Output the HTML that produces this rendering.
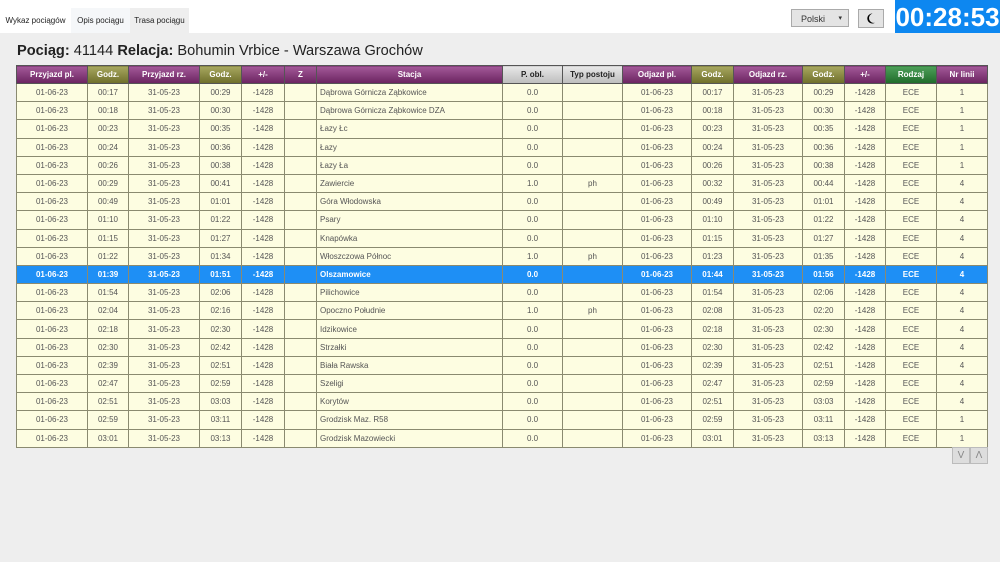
<!DOCTYPE html>
<html><head><meta charset="utf-8"><style>
body{margin:0;width:1000px;height:562px;background:#eeeeee;font-family:"Liberation Sans",Arial,sans-serif;overflow:hidden;position:relative}
.top{position:absolute;left:0;top:0;width:1000px;height:33px;background:#fff}
.tab{position:absolute;top:8px;height:25px;font-size:8px;line-height:25px;text-align:center;color:#222}
.sel{position:absolute;left:791px;top:9px;width:58px;height:18px;border:1px solid #aaa;background:#e4e4e4;font-size:9px;line-height:18px;box-sizing:border-box;padding-left:9px;color:#333}
.moon{position:absolute;left:858px;top:9px;width:26px;height:19px;border:1px solid #aaa;background:#e4e4e4;box-sizing:border-box}
.clock{position:absolute;left:895px;top:0;width:105px;height:33px;background:#0d87f0;color:#fff;font-weight:bold;font-size:26px;line-height:34px;text-align:center}
h1{position:absolute;left:17px;top:43px;margin:0;font-size:14.6px;font-weight:normal;color:#222}
table{position:absolute;left:16px;top:65px;width:971px;border-collapse:collapse;font-size:8px;table-layout:fixed}
th{height:17px;padding:0;color:#fff;font-weight:bold;background:linear-gradient(#a45a99,#6a2360);border:1px solid #555;font-size:8px}
th.g{background:linear-gradient(#a8a860,#6e6e2a)}
th.gr{background:linear-gradient(#e8e8e8,#bdbdbd);color:#222}
th.gn{background:linear-gradient(#4ea05a,#1f6b2a)}
td{height:17.2px;padding:0;border:1px solid #8a8a70;background:#fdfde1;color:#555;text-align:center}
td.l{text-align:left;padding-left:3px}
tr.s td{background:#1e8ff5;color:#fff;font-weight:bold}
.btn{position:absolute;top:447px;width:18px;height:17px;background:#ddd;border:1px solid #bbb;box-sizing:border-box;color:#888;font-size:10px;text-align:center;line-height:16px}
</style></head><body>
<div class="top"></div>
<div class="tab" style="left:0;width:71px;background:#fff">Wykaz pociągów</div>
<div class="tab" style="left:71px;width:59px;background:#f5f7f9">Opis pociągu</div>
<div class="tab" style="left:130px;width:59px;background:#eeeeee">Trasa pociągu</div>
<div class="sel">Polski<span style="position:absolute;right:6px;font-size:7px">▾</span></div>
<div class="moon"><svg width="24" height="17" viewBox="0 0 24 17"><path d="M13.5 3.5a5 5 0 1 0 2.5 9.2 4.2 4.2 0 0 1-2.5-9.2z" fill="#000"/></svg></div>
<div class="clock">00:28:53</div>
<h1><b>Pociąg:</b> 41144 <b>Relacja:</b> Bohumin Vrbice - Warszawa Grochów</h1>
<table>
<colgroup><col style="width:71px"><col style="width:41px"><col style="width:71px"><col style="width:42px"><col style="width:43px"><col style="width:32px"><col style="width:186px"><col style="width:60px"><col style="width:60px"><col style="width:69px"><col style="width:42px"><col style="width:69px"><col style="width:42px"><col style="width:41px"><col style="width:51px"><col style="width:51px"></colgroup>
<tr><th>Przyjazd pl.</th><th class="g">Godz.</th><th>Przyjazd rz.</th><th class="g">Godz.</th><th>+/-</th><th>Z</th><th>Stacja</th><th class="gr">P. obl.</th><th class="gr">Typ postoju</th><th>Odjazd pl.</th><th class="g">Godz.</th><th>Odjazd rz.</th><th class="g">Godz.</th><th>+/-</th><th class="gn">Rodzaj</th><th>Nr linii</th></tr>
<tr><td>01-06-23</td><td>00:17</td><td>31-05-23</td><td>00:29</td><td>-1428</td><td></td><td class="l">Dąbrowa Górnicza Ząbkowice</td><td>0.0</td><td></td><td>01-06-23</td><td>00:17</td><td>31-05-23</td><td>00:29</td><td>-1428</td><td>ECE</td><td>1</td></tr>
<tr><td>01-06-23</td><td>00:18</td><td>31-05-23</td><td>00:30</td><td>-1428</td><td></td><td class="l">Dąbrowa Górnicza Ząbkowice DZA</td><td>0.0</td><td></td><td>01-06-23</td><td>00:18</td><td>31-05-23</td><td>00:30</td><td>-1428</td><td>ECE</td><td>1</td></tr>
<tr><td>01-06-23</td><td>00:23</td><td>31-05-23</td><td>00:35</td><td>-1428</td><td></td><td class="l">Łazy Łc</td><td>0.0</td><td></td><td>01-06-23</td><td>00:23</td><td>31-05-23</td><td>00:35</td><td>-1428</td><td>ECE</td><td>1</td></tr>
<tr><td>01-06-23</td><td>00:24</td><td>31-05-23</td><td>00:36</td><td>-1428</td><td></td><td class="l">Łazy</td><td>0.0</td><td></td><td>01-06-23</td><td>00:24</td><td>31-05-23</td><td>00:36</td><td>-1428</td><td>ECE</td><td>1</td></tr>
<tr><td>01-06-23</td><td>00:26</td><td>31-05-23</td><td>00:38</td><td>-1428</td><td></td><td class="l">Łazy Ła</td><td>0.0</td><td></td><td>01-06-23</td><td>00:26</td><td>31-05-23</td><td>00:38</td><td>-1428</td><td>ECE</td><td>1</td></tr>
<tr><td>01-06-23</td><td>00:29</td><td>31-05-23</td><td>00:41</td><td>-1428</td><td></td><td class="l">Zawiercie</td><td>1.0</td><td>ph</td><td>01-06-23</td><td>00:32</td><td>31-05-23</td><td>00:44</td><td>-1428</td><td>ECE</td><td>4</td></tr>
<tr><td>01-06-23</td><td>00:49</td><td>31-05-23</td><td>01:01</td><td>-1428</td><td></td><td class="l">Góra Włodowska</td><td>0.0</td><td></td><td>01-06-23</td><td>00:49</td><td>31-05-23</td><td>01:01</td><td>-1428</td><td>ECE</td><td>4</td></tr>
<tr><td>01-06-23</td><td>01:10</td><td>31-05-23</td><td>01:22</td><td>-1428</td><td></td><td class="l">Psary</td><td>0.0</td><td></td><td>01-06-23</td><td>01:10</td><td>31-05-23</td><td>01:22</td><td>-1428</td><td>ECE</td><td>4</td></tr>
<tr><td>01-06-23</td><td>01:15</td><td>31-05-23</td><td>01:27</td><td>-1428</td><td></td><td class="l">Knapówka</td><td>0.0</td><td></td><td>01-06-23</td><td>01:15</td><td>31-05-23</td><td>01:27</td><td>-1428</td><td>ECE</td><td>4</td></tr>
<tr><td>01-06-23</td><td>01:22</td><td>31-05-23</td><td>01:34</td><td>-1428</td><td></td><td class="l">Włoszczowa Północ</td><td>1.0</td><td>ph</td><td>01-06-23</td><td>01:23</td><td>31-05-23</td><td>01:35</td><td>-1428</td><td>ECE</td><td>4</td></tr>
<tr class="s"><td>01-06-23</td><td>01:39</td><td>31-05-23</td><td>01:51</td><td>-1428</td><td></td><td class="l">Olszamowice</td><td>0.0</td><td></td><td>01-06-23</td><td>01:44</td><td>31-05-23</td><td>01:56</td><td>-1428</td><td>ECE</td><td>4</td></tr>
<tr><td>01-06-23</td><td>01:54</td><td>31-05-23</td><td>02:06</td><td>-1428</td><td></td><td class="l">Pilichowice</td><td>0.0</td><td></td><td>01-06-23</td><td>01:54</td><td>31-05-23</td><td>02:06</td><td>-1428</td><td>ECE</td><td>4</td></tr>
<tr><td>01-06-23</td><td>02:04</td><td>31-05-23</td><td>02:16</td><td>-1428</td><td></td><td class="l">Opoczno Południe</td><td>1.0</td><td>ph</td><td>01-06-23</td><td>02:08</td><td>31-05-23</td><td>02:20</td><td>-1428</td><td>ECE</td><td>4</td></tr>
<tr><td>01-06-23</td><td>02:18</td><td>31-05-23</td><td>02:30</td><td>-1428</td><td></td><td class="l">Idzikowice</td><td>0.0</td><td></td><td>01-06-23</td><td>02:18</td><td>31-05-23</td><td>02:30</td><td>-1428</td><td>ECE</td><td>4</td></tr>
<tr><td>01-06-23</td><td>02:30</td><td>31-05-23</td><td>02:42</td><td>-1428</td><td></td><td class="l">Strzałki</td><td>0.0</td><td></td><td>01-06-23</td><td>02:30</td><td>31-05-23</td><td>02:42</td><td>-1428</td><td>ECE</td><td>4</td></tr>
<tr><td>01-06-23</td><td>02:39</td><td>31-05-23</td><td>02:51</td><td>-1428</td><td></td><td class="l">Biała Rawska</td><td>0.0</td><td></td><td>01-06-23</td><td>02:39</td><td>31-05-23</td><td>02:51</td><td>-1428</td><td>ECE</td><td>4</td></tr>
<tr><td>01-06-23</td><td>02:47</td><td>31-05-23</td><td>02:59</td><td>-1428</td><td></td><td class="l">Szeligi</td><td>0.0</td><td></td><td>01-06-23</td><td>02:47</td><td>31-05-23</td><td>02:59</td><td>-1428</td><td>ECE</td><td>4</td></tr>
<tr><td>01-06-23</td><td>02:51</td><td>31-05-23</td><td>03:03</td><td>-1428</td><td></td><td class="l">Korytów</td><td>0.0</td><td></td><td>01-06-23</td><td>02:51</td><td>31-05-23</td><td>03:03</td><td>-1428</td><td>ECE</td><td>4</td></tr>
<tr><td>01-06-23</td><td>02:59</td><td>31-05-23</td><td>03:11</td><td>-1428</td><td></td><td class="l">Grodzisk Maz. R58</td><td>0.0</td><td></td><td>01-06-23</td><td>02:59</td><td>31-05-23</td><td>03:11</td><td>-1428</td><td>ECE</td><td>1</td></tr>
<tr><td>01-06-23</td><td>03:01</td><td>31-05-23</td><td>03:13</td><td>-1428</td><td></td><td class="l">Grodzisk Mazowiecki</td><td>0.0</td><td></td><td>01-06-23</td><td>03:01</td><td>31-05-23</td><td>03:13</td><td>-1428</td><td>ECE</td><td>1</td></tr>
</table>
<div class="btn" style="left:952px">V</div>
<div class="btn" style="left:970px">Λ</div>
</body></html>
